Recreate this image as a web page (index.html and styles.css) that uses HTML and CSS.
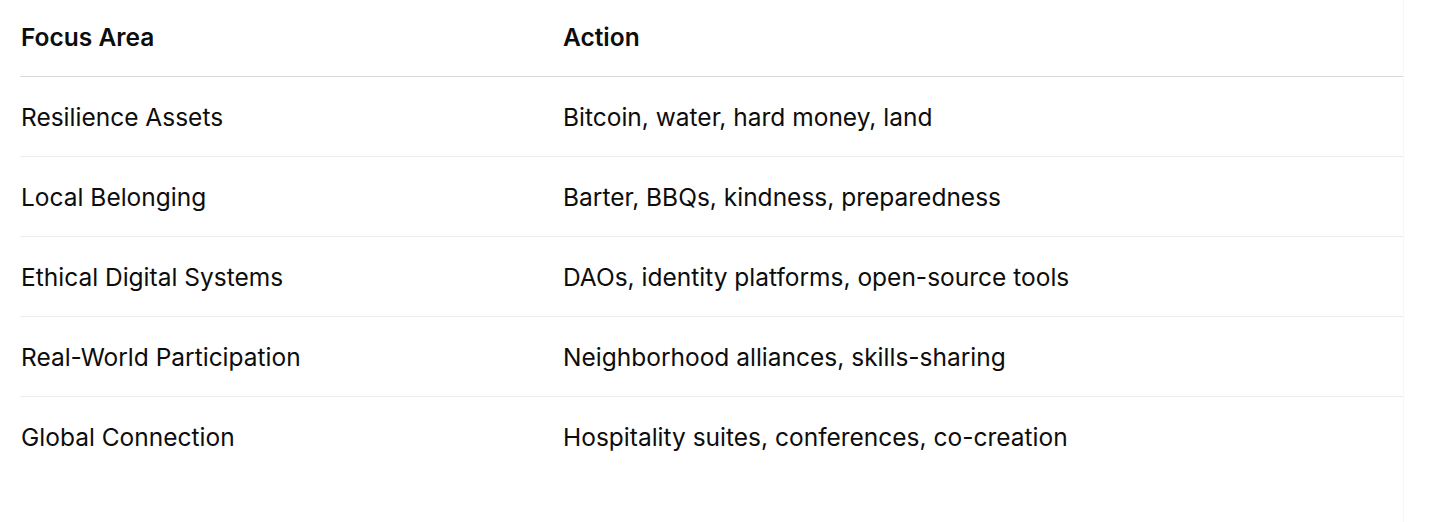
FILE: index.html
```html
<!DOCTYPE html>
<html lang="en">
<head>
<meta charset="utf-8">
<title>Focus Areas</title>
<link rel="stylesheet" href="styles.css">
</head>
<body>
<div class="wrap">
  <table class="focus-table">
    <thead>
      <tr><th class="col-area">Focus Area</th><th>Action</th></tr>
    </thead>
    <tbody>
      <tr><td>Resilience Assets</td><td>Bitcoin, water, hard money, land</td></tr>
      <tr><td>Local Belonging</td><td>Barter, BBQs, kindness, preparedness</td></tr>
      <tr><td>Ethical Digital Systems</td><td>DAOs, identity platforms, open-source tools</td></tr>
      <tr><td>Real-World Participation</td><td>Neighborhood alliances, skills-sharing</td></tr>
      <tr><td>Global Connection</td><td>Hospitality suites, conferences, co-creation</td></tr>
    </tbody>
  </table>
</div>
</body>
</html>
```
FILE: styles.css
```css
html, body {
  margin: 0;
  padding: 0;
  background: #ffffff;
}
body {
  font-family: Inter, "Noto Sans", sans-serif;
  color: #0d0d0d;
}
.wrap {
  width: 1383px;
  margin-left: 20px;
  border-right: 1px solid #f7f7f7;
  height: 522px;
}
.focus-table {
  width: 1383px;
  border-collapse: collapse;
  font-size: 24.5px;
  line-height: 35px;
}
.focus-table th {
  text-align: left;
  font-weight: 600;
  padding: 20px 0 21px 1px;
  border-bottom: 1px solid #d9d9d9;
}
.focus-table .col-area {
  width: 541px;
}
.focus-table td {
  padding: 23px 0 21px 1px;
  border-bottom: 1px solid #ececec;
  font-weight: 400;
}
.focus-table tbody tr:last-child td {
  border-bottom: none;
}
```
